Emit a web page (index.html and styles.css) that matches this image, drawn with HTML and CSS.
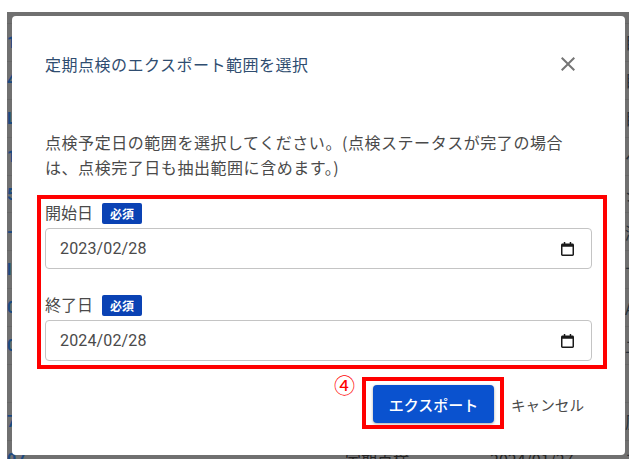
FILE: index.html

```html
<!DOCTYPE html>
<html lang="ja">
<head>
    <meta charset="UTF-8">
    <meta name="viewport" content="width=device-width, initial-scale=1.0">
    <title>定期点検のエクスポート</title>
    <link rel="stylesheet" href="styles.css">
</head>
<body>
    <div class="backdrop">
        <div class="list">
            <div class="list-row"><span class="code">1</span><span></span><span></span><span class="end">目</span></div>
            <div class="list-row"><span class="code">4</span><span></span><span></span><span class="end">目</span></div>
            <div class="list-row"><span class="code">L</span><span></span><span></span><span class="end">目</span></div>
            <div class="list-row"><span class="code">1</span><span></span><span></span><span class="end">ヘ</span></div>
            <div class="list-row"><span class="code">5</span><span></span><span></span><span class="end">シ</span></div>
            <div class="list-row"><span class="code">-</span><span></span><span></span><span class="end">湖</span></div>
            <div class="list-row"><span class="code">l:</span><span></span><span></span><span class="end">サ</span></div>
            <div class="list-row"><span class="code">0</span><span></span><span></span><span class="end">A</span></div>
            <div class="list-row"><span class="code">0</span><span></span><span></span><span class="end">二</span></div>
            <div class="list-row"><span class="code"></span><span></span><span></span><span class="end"></span></div>
            <div class="list-row"><span class="code">7</span><span></span><span></span><span class="end">厉</span></div>
            <div class="list-row"><span class="code">07</span><span>定期点検</span><span>2024/01/27</span><span class="end">二</span></div>
        </div>

        <div class="dialog">
            <div class="dialog-header">
                <h2 class="dialog-title">定期点検のエクスポート範囲を選択</h2>
                <svg class="close-icon" viewBox="0 0 24 24" width="24" height="24">
                    <path d="M19 6.41L17.59 5 12 10.59 6.41 5 5 6.41 10.59 12 5 17.59 6.41 19 12 13.41 17.59 19 19 17.59 13.41 12z"/>
                </svg>
            </div>

            <p class="dialog-text">点検予定日の範囲を選択してください。(点検ステータスが完了の場合は、点検完了日も抽出範囲に含めます。)</p>

            <div class="form-group">
                <div class="field-label">開始日<span class="required">必須</span></div>
                <div class="date-field">
                    <span>2023/02/28</span>
                    <svg class="calendar-icon" viewBox="0 0 14 15" width="13" height="14">
                        <path d="M3 0h1.6v1.6h4.8V0H11v1.6h1.4c.9 0 1.6.7 1.6 1.6v10.2c0 .9-.7 1.6-1.6 1.6H1.6C.7 15 0 14.3 0 13.4V3.2c0-.9.7-1.6 1.6-1.6H3zM1.6 5.2v8.2h10.8V5.2z"/>
                    </svg>
                </div>
            </div>

            <div class="form-group">
                <div class="field-label">終了日<span class="required">必須</span></div>
                <div class="date-field">
                    <span>2024/02/28</span>
                    <svg class="calendar-icon" viewBox="0 0 14 15" width="13" height="14">
                        <path d="M3 0h1.6v1.6h4.8V0H11v1.6h1.4c.9 0 1.6.7 1.6 1.6v10.2c0 .9-.7 1.6-1.6 1.6H1.6C.7 15 0 14.3 0 13.4V3.2c0-.9.7-1.6 1.6-1.6H3zM1.6 5.2v8.2h10.8V5.2z"/>
                    </svg>
                </div>
            </div>

            <div class="dialog-actions">
                <button class="export-btn">エクスポート</button>
                <button class="cancel-btn">キャンセル</button>
            </div>
        </div>

        <!-- annotations drawn on top of the dialog -->
        <div class="mark mark-fields"></div>
        <div class="mark mark-button"></div>
        <div class="mark-number">④</div>
    </div>
</body>
</html>
```

FILE: styles.css

```css
* {
    margin: 0;
    padding: 0;
    box-sizing: border-box;
}

body {
    font-family: "Noto Sans CJK JP", sans-serif;
    background: white;
    height: 461px;
    overflow: hidden;
}

.backdrop {
    position: relative;
    margin: 12px 6px 0 7px;
    height: 447px;
    background: #707070;
    overflow: hidden;
}

.list {
    padding-top: 11px;
}

.list-row {
    display: grid;
    grid-template-columns: 338px 145px 135px 1fr;
    align-items: center;
    height: 37.9px;
    border-top: 1px solid #676767;
    color: #232323;
    font-size: 16px;
    white-space: nowrap;
    overflow: hidden;
}

.code {
    color: #1c4a80;
    font-family: Roboto, sans-serif;
    font-weight: 700;
}

.end {
    color: #26303a;
}

.dialog {
    position: absolute;
    left: 5px;
    top: 4px;
    width: 613px;
    height: 439px;
    padding: 33px 33px 0;
    background: white;
    border-radius: 4px;
}

.dialog-header {
    display: flex;
    justify-content: space-between;
    align-items: center;
    height: 30px;
    margin-bottom: 51px;
}

.dialog-title {
    font-size: 16px;
    font-weight: 400;
    letter-spacing: 0.5px;
    color: #2f4d70;
}

.close-icon {
    fill: #757575;
    margin-right: 12px;
}

.dialog-text {
    max-width: 530px;
    height: 50px;
    margin-bottom: 17px;
    font-size: 16px;
    line-height: 25px;
    letter-spacing: 0.55px;
    color: #4a4a4a;
}

.form-group {
    margin-bottom: 20px;
}

.field-label {
    display: flex;
    align-items: center;
    gap: 9px;
    height: 31px;
    padding-bottom: 2px;
    font-size: 16px;
    color: #4a4a4a;
}

.required {
    width: 40px;
    height: 21px;
    margin-top: 4px;
    background: #0a42b4;
    border-radius: 2px;
    color: white;
    font-size: 12px;
    font-weight: 700;
    line-height: 21px;
    text-align: center;
}

.date-field {
    display: flex;
    justify-content: space-between;
    align-items: center;
    width: 547px;
    height: 41px;
    padding: 0 17px 0 14px;
    border: 1px solid #c4c4c4;
    border-radius: 4px;
    font-family: Roboto, sans-serif;
    font-size: 16px;
    letter-spacing: 0.15px;
    color: #4a4a4a;
}

.calendar-icon {
    fill: #1a1a1a;
}

.dialog-actions {
    display: flex;
    align-items: center;
    justify-content: flex-end;
    gap: 17px;
    margin-top: 4px;
    padding-top: 4px;
    padding-right: 8px;
}

.export-btn {
    width: 121px;
    height: 38px;
    background: #0a52cf;
    border: none;
    border-radius: 4px;
    box-shadow: 0 1px 3px rgba(0,0,0,0.35);
    color: white;
    font-family: inherit;
    font-size: 15px;
    font-weight: 500;
}

.cancel-btn {
    background: none;
    border: none;
    color: #4a4a4a;
    font-family: inherit;
    font-size: 14.6px;
}

.mark {
    position: absolute;
    border: 4px solid #ff0000;
}

.mark-fields {
    left: 30px;
    top: 183px;
    width: 570px;
    height: 174px;
}

.mark-button {
    left: 355px;
    top: 365px;
    width: 142px;
    height: 52px;
}

.mark-number {
    position: absolute;
    left: 327px;
    top: 358px;
    color: #ff0000;
    font-size: 21px;
    line-height: 28px;
}
```
